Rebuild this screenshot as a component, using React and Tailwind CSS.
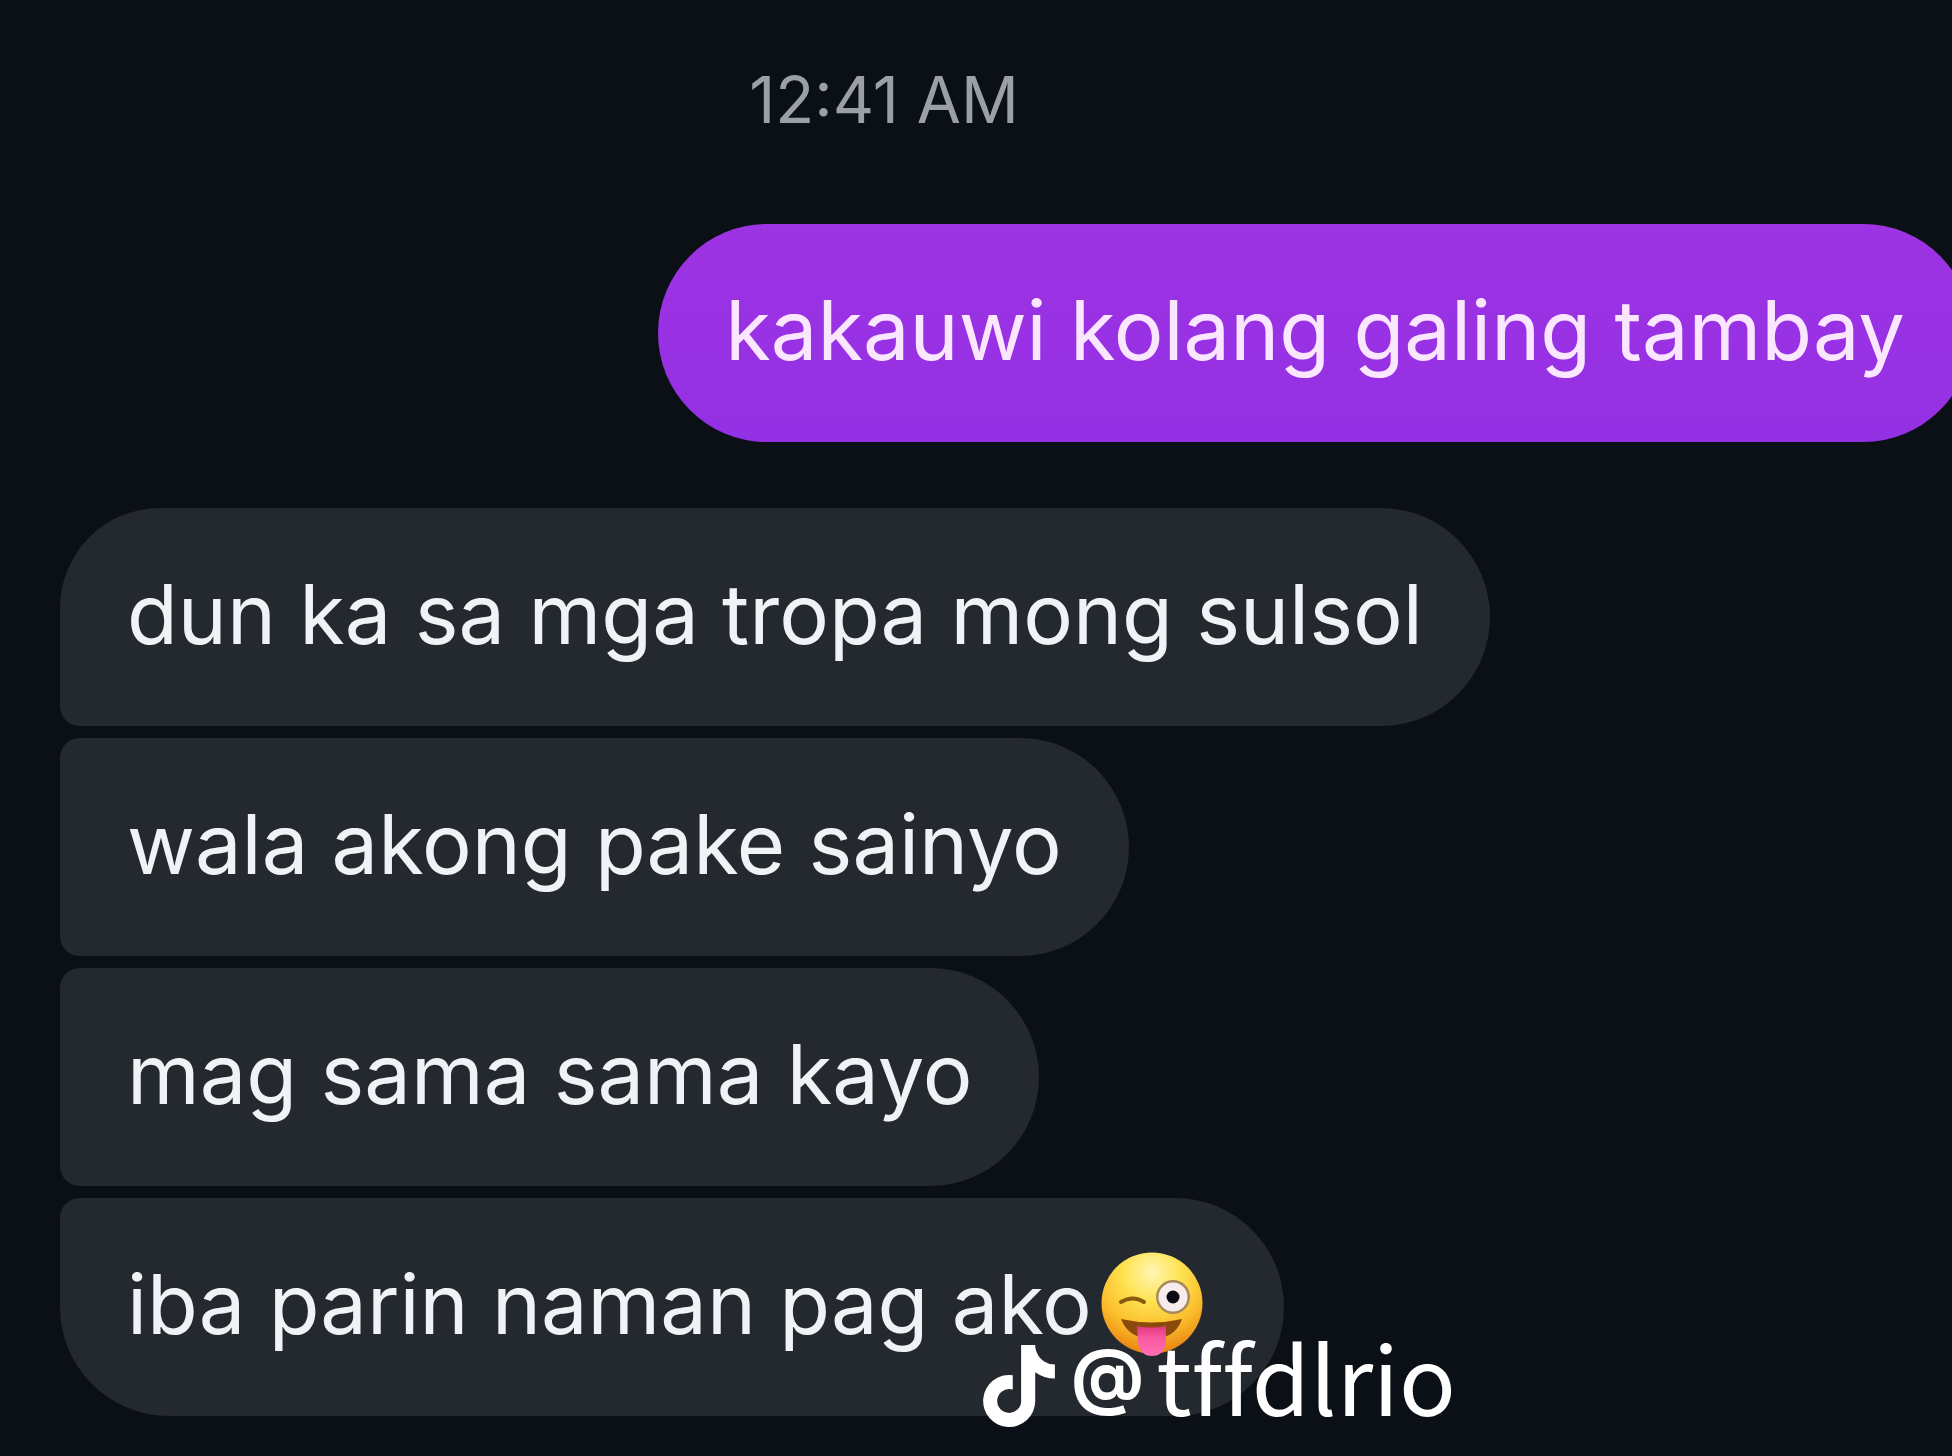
import React from "react";
import { FaTiktok } from "react-icons/fa";

const replies = [
  { text: "dun ka sa mga tropa mong sulsol", shape: "rounded-tl-[100px] rounded-bl-[20px]" },
  { text: "wala akong pake sainyo", shape: "rounded-l-[20px]" },
  { text: "mag sama sama kayo", shape: "rounded-l-[20px]" },
];

const bubble = "w-fit whitespace-nowrap pl-[67px] pt-[51px] pb-[57px] text-[83px] leading-[110px]";

function WinkFace() {
  return (
    <svg viewBox="0 0 104 104" className="h-[104px] w-[104px] shrink-0" role="img" aria-label="winking face with tongue">
      <defs>
        <radialGradient id="face" cx="0.5" cy="0.2" r="0.8">
          <stop offset="0" stopColor="#fff6b4" />
          <stop offset="0.35" stopColor="#fee352" />
          <stop offset="0.7" stopColor="#fbbd2b" />
          <stop offset="1" stopColor="#e98412" />
        </radialGradient>
        <linearGradient id="tongue" x1="0" y1="0" x2="0" y2="1">
          <stop offset="0" stopColor="#e0367f" />
          <stop offset="0.4" stopColor="#f9599f" />
          <stop offset="1" stopColor="#ff6fb4" />
        </linearGradient>
      </defs>
      <circle cx="52" cy="51" r="50.5" fill="url(#face)" />
      <path d="M21 50 Q33 43 44 50" fill="none" stroke="#8a5a10" strokeWidth="4" strokeLinecap="round" />
      <circle cx="73" cy="45" r="17" fill="#a58a5c" />
      <circle cx="73" cy="45" r="14.5" fill="#f6ecec" />
      <circle cx="73" cy="45" r="6.5" fill="#0c0a12" />
      <path d="M21 67 Q52 74 82 67 Q76 86 52 87 Q28 86 21 67Z" fill="#8a4a0c" />
      <path d="M37 74 Q52 77 66 74 V90 Q64 104 52 104 Q40 104 38 90Z" fill="url(#tongue)" />
    </svg>
  );
}

export default function App() {
  return (
    <main className="min-h-screen overflow-hidden bg-[#0b1017] pt-[60px] font-['Inter',sans-serif] text-[#f0f2f6]">
      <time className="block pr-[184px] text-center text-[64px] leading-[80px] text-[#9b9fa6]">12:41 AM</time>

      <div className="mt-[84px] -mr-[20px] flex justify-end">
        <p className={`${bubble} rounded-full bg-linear-to-b from-[#9d33e3] to-[#9430e4] pr-[67px] text-[#fbe6ff]`}>
          kakauwi kolang galing tambay
        </p>
      </div>

      <div className="mt-[66px] flex flex-col gap-3 pl-[60px]">
        {replies.map((r) => (
          <p key={r.text} className={`${bubble} rounded-r-[109px] bg-[#24282f] pr-[67px] ${r.shape}`}>
            {r.text}
          </p>
        ))}
        <div className="relative w-fit">
          <p className={`${bubble} flex items-center gap-2 rounded-r-[109px] rounded-tl-[20px] rounded-bl-[109px] bg-[#24282f] pr-[80px]`}>
            iba parin naman pag ako
            <WinkFace />
          </p>
          <a href="#tffdlrio" className="absolute top-[117px] left-[923px] flex items-end gap-4 whitespace-nowrap text-white">
            <FaTiktok className="mb-2 h-[82px] w-[72px]" aria-hidden="true" />
            <span className="flex items-center gap-3 font-['Noto_Sans_CJK_SC',sans-serif] text-[94px] leading-[120px] [font-variant-ligatures:none]">
              <span className="font-['Inter',sans-serif] text-[72px] font-bold">@</span>
              <span>tffdlrio</span>
            </span>
          </a>
        </div>
      </div>
    </main>
  );
}
